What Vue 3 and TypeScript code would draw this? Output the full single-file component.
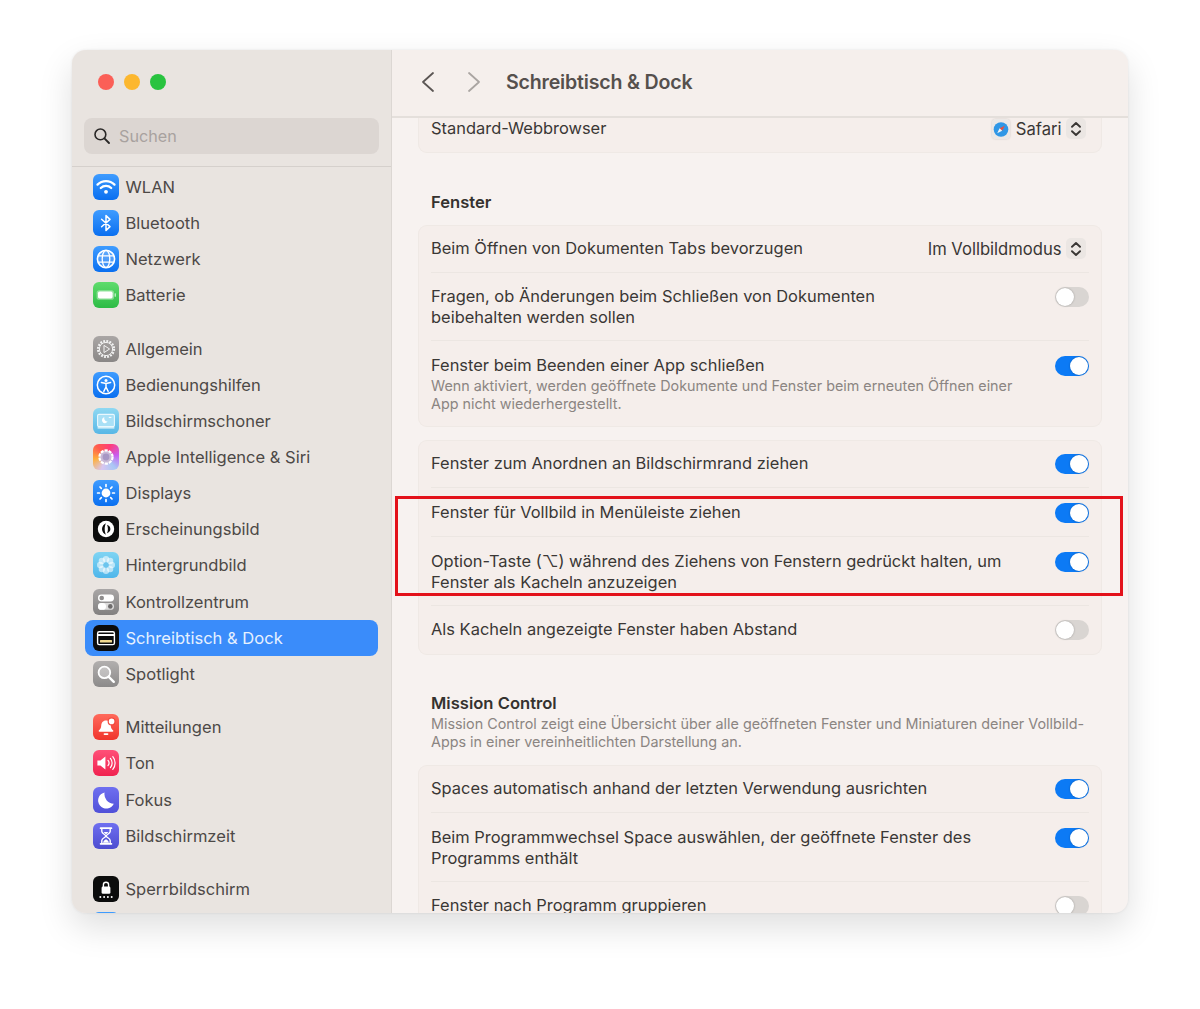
<script setup lang="ts">
interface NavItem { label: string; icon: string; bg: string; active?: boolean }
const groups: NavItem[][] = [
  [
    { label: 'WLAN', icon: 'wifi', bg: 'linear-gradient(#3f9cff,#0a6ff0)' },
    { label: 'Bluetooth', icon: 'bt', bg: 'linear-gradient(#3f9cff,#0a6ff0)' },
    { label: 'Netzwerk', icon: 'globe', bg: 'linear-gradient(#3f9cff,#0a6ff0)' },
    { label: 'Batterie', icon: 'battery', bg: 'linear-gradient(#5fdc6c,#2dbb45)' }
  ],
  [
    { label: 'Allgemein', icon: 'gear', bg: 'linear-gradient(#aaa6a5,#8a8786)' },
    { label: 'Bedienungshilfen', icon: 'access', bg: 'linear-gradient(#3f9cff,#0a6ff0)' },
    { label: 'Bildschirmschoner', icon: 'saver', bg: 'linear-gradient(#8fd8f2,#58b7e6)' },
    { label: 'Apple Intelligence & Siri', icon: 'siri', bg: 'conic-gradient(from 20deg,#ff3d77,#c95cf0,#a9c8f5,#d8c6f0,#ffb03b,#ff5a4d,#ff3d77)' },
    { label: 'Displays', icon: 'sun', bg: 'linear-gradient(#3f9cff,#0a6ff0)' },
    { label: 'Erscheinungsbild', icon: 'appear', bg: '#0c0c0c' },
    { label: 'Hintergrundbild', icon: 'flower', bg: 'linear-gradient(#7fd4f3,#4fb6ea)' },
    { label: 'Kontrollzentrum', icon: 'control', bg: 'linear-gradient(#a9a6a6,#828080)' },
    { label: 'Schreibtisch & Dock', icon: 'dock', bg: '#0c0c0c', active: true },
    { label: 'Spotlight', icon: 'spot', bg: 'linear-gradient(#b2afae,#8c8a8a)' }
  ],
  [
    { label: 'Mitteilungen', icon: 'bell', bg: 'linear-gradient(#ff6a5c,#f0342c)' },
    { label: 'Ton', icon: 'sound', bg: 'linear-gradient(#ff5078,#f0224f)' },
    { label: 'Fokus', icon: 'moon', bg: 'linear-gradient(#6f6ff0,#5050d8)' },
    { label: 'Bildschirmzeit', icon: 'hour', bg: 'linear-gradient(#6f6ff0,#4c4cd0)' }
  ],
  [
    { label: 'Sperrbildschirm', icon: 'lock', bg: '#0c0c0c' },
    { label: 'Datenschutz & Sicherheit', icon: 'none', bg: 'linear-gradient(#3f9cff,#0a6ff0)' }
  ]
]

interface Row { title: string[]; sub?: string[]; toggle?: boolean; select?: string; safari?: boolean }
const firstCard: Row[] = [{ title: ['Standard-Webbrowser'], select: 'Safari', safari: true }]
const windowCard: Row[] = [
  { title: ['Beim Öffnen von Dokumenten Tabs bevorzugen'], select: 'Im Vollbildmodus' },
  { title: ['Fragen, ob Änderungen beim Schließen von Dokumenten', 'beibehalten werden sollen'], toggle: false },
  {
    title: ['Fenster beim Beenden einer App schließen'],
    sub: ['Wenn aktiviert, werden geöffnete Dokumente und Fenster beim erneuten Öffnen einer', 'App nicht wiederhergestellt.'],
    toggle: true
  }
]
const tileCard: Row[] = [
  { title: ['Fenster zum Anordnen an Bildschirmrand ziehen'], toggle: true },
  { title: ['Fenster für Vollbild in Menüleiste ziehen'], toggle: true },
  { title: ['Option-Taste (⌥) während des Ziehens von Fenstern gedrückt halten, um', 'Fenster als Kacheln anzuzeigen'], toggle: true },
  { title: ['Als Kacheln angezeigte Fenster haben Abstand'], toggle: false }
]
const missionCard: Row[] = [
  { title: ['Spaces automatisch anhand der letzten Verwendung ausrichten'], toggle: true },
  { title: ['Beim Programmwechsel Space auswählen, der geöffnete Fenster des', 'Programms enthält'], toggle: true },
  { title: ['Fenster nach Programm gruppieren'], toggle: false }
]
const sections = [
  { heading: '', desc: [] as string[], rows: firstCard },
  { heading: 'Fenster', desc: [] as string[], rows: windowCard },
  { heading: '', desc: [] as string[], rows: tileCard },
  {
    heading: 'Mission Control',
    desc: ['Mission Control zeigt eine Übersicht über alle geöffneten Fenster und Miniaturen deiner Vollbild-', 'Apps in einer vereinheitlichten Darstellung an.'],
    rows: missionCard
  }
]
</script>

<template>
  <div class="stage">
    <div class="window">
      <aside class="sidebar">
        <div class="lights">
          <span class="light red"></span>
          <span class="light yellow"></span>
          <span class="light green"></span>
        </div>
        <div class="search">
          <svg class="search-icon" viewBox="0 0 18 18" width="18" height="18">
            <circle cx="7.4" cy="7.4" r="5.4" fill="none" stroke="#2a2827" stroke-width="1.6" />
            <path d="M11.4 11.4 16 16" stroke="#2a2827" stroke-width="1.9" stroke-linecap="round" />
          </svg>
          <span>Suchen</span>
        </div>
        <nav class="nav">
          <div v-for="(group, g) in groups" :key="g" class="group">
            <div v-for="item in groups[g]" :key="item.label" class="nav-row" :class="{ active: item.active }">
              <span class="app-icon" :style="{ background: item.bg }">
                <svg viewBox="0 0 26 26" width="26" height="26" fill="none">
                  <g v-if="item.icon === 'wifi'" stroke="#fff" stroke-linecap="round">
                    <path d="M4.5 10.6a12 12 0 0 1 17 0" stroke-width="2.3" />
                    <path d="M7.8 14a7.4 7.4 0 0 1 10.4 0" stroke-width="2.3" />
                    <circle cx="13" cy="17.8" r="1.9" fill="#fff" stroke="none" />
                  </g>
                  <path v-else-if="item.icon === 'bt'" d="M8.6 9.2 17 16.6 13 20.4V5.6l4 3.8-8.4 7.4" stroke="#fff" stroke-width="1.5" stroke-linejoin="round" stroke-linecap="round" />
                  <g v-else-if="item.icon === 'globe'" stroke="#fff" stroke-width="1.3">
                    <circle cx="13" cy="13" r="8.6" fill="#ffffff33" stroke-width="1.6" />
                    <ellipse cx="13" cy="13" rx="3.8" ry="8.6" />
                    <path d="M5 9.8h16M5 16.2h16" />
                  </g>
                  <g v-else-if="item.icon === 'battery'">
                    <rect x="3.6" y="8.2" width="17.4" height="9.6" rx="2.6" fill="#ffffff60" />
                    <rect x="5" y="9.600" width="14.600" height="6.800" rx="1.600" fill="#fff" />
                    <rect x="21.6" y="11.2" width="1.3" height="3.6" rx=".6" fill="#ffffffb0" />
                  </g>
                  <g v-else-if="item.icon === 'gear'" stroke="#f2f2f2">
                    <circle cx="13" cy="13" r="8" stroke-width="2.2" stroke-dasharray="1.9 1.25" />
                    <circle cx="13" cy="13" r="6.6" stroke-width="1" />
                    <path d="M11 9.4 16.6 13 11 16.6Z" stroke-width="1" stroke-linejoin="round" />
                  </g>
                  <g v-else-if="item.icon === 'access'">
                    <circle cx="13" cy="13" r="8.7" stroke="#fff" stroke-width="1.5" />
                    <circle cx="13" cy="8.4" r="1.5" fill="#fff" />
                    <path d="M8.4 10.6 13 11.6l4.6-1M13 11.6v3.4M13 15l-2.2 4.4M13 15l2.2 4.4" stroke="#fff" stroke-width="1.5" stroke-linecap="round" stroke-linejoin="round" />
                  </g>
                  <g v-else-if="item.icon === 'saver'">
                    <rect x="4.6" y="6.4" width="16.8" height="12.2" rx="1.4" fill="#a9e0f6" stroke="#eaf8fd" stroke-width="1.1" />
                    <path d="M4.6 19.8h16.8" stroke="#eaf8fd" stroke-width="1.2" />
                    <path d="M11.4 9.2a3 3 0 1 0 3.2 4.4 3.3 3.3 0 0 1-3.2-4.4Z" fill="#fff" />
                    <path d="M15.8 9.4h2.6" stroke="#fff" stroke-width="1" />
                  </g>
                  <g v-else-if="item.icon === 'siri'">
                    <circle cx="13" cy="13" r="6.6" fill="#c9b9d6" stroke="#fff" stroke-width="2.2" stroke-dasharray="3.2 1" />
                    <circle cx="13" cy="13" r="3.4" fill="#a797c4" />
                  </g>
                  <g v-else-if="item.icon === 'sun'" stroke="#fff" stroke-linecap="round" stroke-width="1.7">
                    <circle cx="13" cy="13" r="4.4" fill="#fff" stroke="none" />
                    <path d="M13 4.6v1.8M13 19.6v1.8M4.6 13h1.8M19.6 13h1.8M7 7l1.3 1.3M17.7 17.7 19 19M7 19l1.3-1.3M17.7 8.3 19 7" />
                  </g>
                  <g v-else-if="item.icon === 'appear'">
                    <circle cx="13" cy="13" r="8.200" fill="#fff" />
                    <path d="M13 7.200c-2.400 1-4 3.200-4 5.800s1.600 4.800 4 5.800c-.9-1.600-1.300-3.600-1.300-5.800s.4-4.200 1.300-5.800Z" fill="#0c0c0c" />
                    <path d="M14 8.800c2 .6 3.400 2.200 3.400 4.200s-1.400 3.600-3.400 4.200c.6-1.200.9-2.600.9-4.200s-.3-3-.9-4.200Z" fill="#0c0c0c" />
                  </g>
                  <g v-else-if="item.icon === 'flower'" fill="#ffffff90">
                    <circle cx="13" cy="7.200" r="3.200" />
                    <circle cx="13" cy="18.800" r="3.200" />
                    <circle cx="7.200" cy="13" r="3.200" />
                    <circle cx="18.800" cy="13" r="3.200" />
                    <circle cx="8.900" cy="8.900" r="3.200" />
                    <circle cx="17.100" cy="8.900" r="3.200" />
                    <circle cx="8.900" cy="17.100" r="3.200" />
                    <circle cx="17.100" cy="17.100" r="3.200" />
                    <circle cx="13" cy="13" r="2.400" fill="#6cc5ee" />
                  </g>
                  <g v-else-if="item.icon === 'control'">
                    <rect x="5" y="5.600" width="16" height="6.800" rx="3.400" fill="#fff" />
                    <circle cx="8.700" cy="9" r="2.300" fill="#8f8d8d" />
                    <rect x="5" y="14" width="16" height="6.800" rx="3.400" fill="#dddcdc" />
                    <circle cx="17.300" cy="17.400" r="2.300" fill="#6e6c6c" />
                    <rect x="5" y="14" width="8" height="6.800" rx="3.400" fill="#fff" />
                  </g>
                  <g v-else-if="item.icon === 'dock'">
                    <rect x="4.600" y="6.800" width="16.800" height="12.800" rx="1.600" stroke="#fff" stroke-width="1.400" />
                    <path d="M5 10h16" stroke="#fff" stroke-width="1.800" />
                    <rect x="7" y="15" width="12" height="2.600" rx=".6" fill="#f1d98f" />
                  </g>
                  <g v-else-if="item.icon === 'spot'" stroke="#fff">
                    <circle cx="11.400" cy="11.400" r="5.800" stroke-width="1.800" fill="#ffffff55" />
                    <path d="M15.800 15.800 20.800 20.800" stroke-width="2.400" stroke-linecap="round" />
                  </g>
                  <g v-else-if="item.icon === 'bell'" fill="#fff">
                    <path d="M13 6.400c-3.200 0-4.600 2.400-4.800 5.400-.1 2-.9 3.400-2.400 4.800-.4.5-.1 1.200.6 1.200h13.200c.7 0 1-.7.600-1.200-1.500-1.400-2.300-2.800-2.400-4.800-.2-3-1.600-5.400-4.800-5.400Z" />
                    <rect x="10.600" y="19.200" width="4.800" height="1.800" rx=".9" />
                    <circle cx="18.600" cy="7.400" r="3.400" stroke="#f2483d" stroke-width="1.200" />
                  </g>
                  <g v-else-if="item.icon === 'sound'">
                    <path d="M4.400 10.400h3l5-4v13.200l-5-4h-3Z" fill="#fff" />
                    <path d="M15 10.400a4 4 0 0 1 0 5.200M17.400 8.400a7 7 0 0 1 0 9.200M19.800 6.600a10 10 0 0 1 0 12.800" stroke="#fff" stroke-width="1.200" stroke-linecap="round" />
                  </g>
                  <path v-else-if="item.icon === 'moon'" d="M11.600 5.400a8.200 8.200 0 1 0 9.200 11.400A9.600 9.600 0 0 1 11.600 5.400Z" fill="#fff" />
                  <g v-else-if="item.icon === 'hour'">
                    <path d="M7.600 5.200h10.800M7.600 20.800h10.800" stroke="#fff" stroke-width="1.800" stroke-linecap="round" />
                    <path d="M8.800 6v2.600c0 2 4.200 3.400 4.200 4.400s-4.200 2.400-4.200 4.400V20M17.200 6v2.600c0 2-4.200 3.400-4.200 4.400s4.200 2.400 4.200 4.400V20" stroke="#fff" stroke-width="1.400" />
                    <path d="M10 19.800c.4-2 2-3 3-3.600 1 .6 2.600 1.600 3 3.600ZM10.600 9h4.800L13 11.400Z" fill="#fff" />
                  </g>
                  <g v-else-if="item.icon === 'lock'" fill="#fff">
                    <path d="M10.400 11V8.800a2.600 2.600 0 0 1 5.200 0V11" stroke="#fff" stroke-width="1.400" fill="none" />
                    <rect x="8.600" y="10.600" width="8.800" height="7.200" rx="1.400" />
                    <circle cx="7.300" cy="21" r="1" />
                    <circle cx="11.100" cy="21" r="1" />
                    <circle cx="14.900" cy="21" r="1" />
                    <circle cx="18.700" cy="21" r="1" />
                  </g>
                </svg>
              </span>
              <span class="nav-label">{{ item.label }}</span>
            </div>
          </div>
        </nav>
      </aside>

      <main class="main">
        <header class="header">
          <svg class="chev" viewBox="0 0 14 22" width="14" height="22" fill="none">
            <path d="M12 2 2 11l10 9" stroke="#5b5654" stroke-width="1.800" stroke-linecap="round" stroke-linejoin="round" />
          </svg>
          <svg class="chev fwd" viewBox="0 0 14 22" width="14" height="22" fill="none">
            <path d="M2 2 12 11 2 20" stroke="#aaa5a2" stroke-width="1.800" stroke-linecap="round" stroke-linejoin="round" />
          </svg>
          <h1 class="title">Schreibtisch &amp; Dock</h1>
        </header>
        <div class="scroll">
          <section v-for="(sec, s) in sections" :key="s" class="section" :class="{ headed: sec.heading, described: sec.desc.length }">
            <div v-if="sec.heading" class="sec-head">
              <h2>{{ sec.heading }}</h2>
              <p v-for="line in sec.desc" :key="line">{{ line }}</p>
            </div>
            <div class="card">
              <div v-for="row in sec.rows" :key="row.title[0]" class="row" :class="{ 'has-sub': row.sub, picker: row.select }">
                <div class="row-text">
                  <div v-for="line in row.title" :key="line" class="row-title">{{ line }}</div>
                  <div v-for="line in row.sub" :key="line" class="row-sub">{{ line }}</div>
                </div>
                <div v-if="row.select" class="select">
                  <span v-if="row.safari" class="safari">
                    <svg viewBox="0 0 18 20" width="18" height="20">
                      <rect width="18" height="20" rx="4" fill="#ebe8e6" />
                      <circle cx="9" cy="10.500" r="7.300" fill="#2f97e6" />
                      <path d="M12.800 6.700 7.600 9.300 10.200 11.700Z" fill="#e8503f" />
                      <path d="M5.200 14.300 7.600 9.300 10.200 11.700Z" fill="#f4f4f4" />
                    </svg>
                  </span>
                  <span>{{ row.select }}</span>
                  <span class="stepper">
                    <svg viewBox="0 0 12 18" width="12" height="18" fill="none">
                      <path d="M2 6.800 6 3l4 3.800M2 11.200 6 15l4-3.800" stroke="#3a3735" stroke-width="1.900" stroke-linecap="round" stroke-linejoin="round" />
                    </svg>
                  </span>
                </div>
                <span v-else class="toggle" :class="{ on: row.toggle }"><i></i></span>
              </div>
            </div>
          </section>
        </div>
      </main>
    </div>
    <div class="callout"></div>
  </div>
</template>

<style>
html, body { background: #fff; }
</style>

<style scoped>
* { box-sizing: border-box; }
.stage {
  position: relative;
  width: 1200px;
  height: 1009px;
  padding: 50px 72px 0;
  background: #fff;
  font-family: Inter, "Liberation Sans", sans-serif;
  overflow: hidden;
}
.window {
  display: flex;
  width: 1056px;
  height: 863px;
  border-radius: 14px;
  overflow: hidden;
  background: #f7f2f0;
  box-shadow: 0 14px 34px rgba(0, 0, 0, .13), 0 0 3px rgba(0, 0, 0, .08);
}
.sidebar {
  flex: 0 0 320px;
  display: flex;
  flex-direction: column;
  background: #e9e4e0;
  border-right: 1px solid #dcd7d3;
  overflow: hidden;
}
.lights { flex: none; display: flex; gap: 10px; padding: 24px 0 0 26px; height: 68px; }
.light { width: 16px; height: 16px; border-radius: 50%; }
.red { background: #fb5f57; }
.yellow { background: #fcb72f; }
.green { background: #28c33f; }
.search {
  flex: none;
  display: flex;
  align-items: center;
  gap: 8px;
  height: 36px;
  margin: 0 12px;
  padding-left: 9px;
  border-radius: 8px;
  background: #dcd6d2;
  color: #a8a29f;
  font-size: 16.2px;
}
.search-icon { flex: none; }
.nav {
  flex: none;
  margin-top: 12px;
  padding: 2px 13px 0;
  border-top: 1px solid #d5d0cc;
}
.group { margin-bottom: 17.5px; }
.nav-row {
  display: flex;
  align-items: center;
  gap: 6.5px;
  height: 36.1px;
  padding-left: 8px;
  border-radius: 8px;
  color: #4d4947;
  font-size: 16.55px;
  white-space: nowrap;
}
.nav-row.active { background: #3a8cfa; color: #e6f1ff; }
.app-icon {
  flex: none;
  display: block;
  width: 26px;
  height: 26px;
  border-radius: 6px;
  overflow: hidden;
}
.app-icon svg { display: block; }
.main { flex: 1; min-width: 0; display: flex; flex-direction: column; }
.header {
  flex: none;
  display: flex;
  align-items: center;
  height: 68px;
  padding: 0 0 2px 29px;
  background: #f5efec;
  border-bottom: 2px solid #e4dfdb;
  position: relative;
  z-index: 1;
}
.chev.fwd { margin-left: 32px; }
.title {
  margin: 0 0 0 25px;
  font-size: 19.6px;
  font-weight: 600;
  color: #55504d;
  letter-spacing: -.2px;
}
.scroll { flex: 1; min-height: 0; overflow: hidden; padding: 0 26px; margin-top: -13.5px; }
.section { margin-top: 13px; }
.section:first-child { margin-top: 0; }
.section.headed { margin-top: 39px; }
.section.described { margin-top: 38px; }
.sec-head { padding: 0 13px; margin-bottom: 12px; }
.section.described .sec-head { margin-bottom: 14px; }
.sec-head h2 {
  margin: 0;
  font-size: 16.6px;
  line-height: 21px;
  font-weight: 600;
  color: #35322f;
}
.sec-head p {
  margin: 0;
  font-size: 14.36px;
  line-height: 18px;
  color: #8b8582;
  white-space: nowrap;
}
.sec-head p:first-of-type { margin-top: 1px; }
.card {
  background: #f5eeeb;
  box-shadow: inset 0 0 0 1px #efe9e5;
  border-radius: 9px;
  padding: 0 13px;
}
.row {
  display: flex;
  align-items: flex-start;
  justify-content: space-between;
  min-height: 48.85px;
  padding: 13.5px 0 12px;
  border-bottom: 1px solid #ece6e2;
}
.row:last-child { border-bottom: 0; }
.row.picker { min-height: 48px; }
.row.has-sub { padding: 14px 0 14px; }
.row-text { min-width: 0; }
.row-title {
  font-size: 16.45px;
  line-height: 21px;
  color: #3a3735;
  white-space: nowrap;
}
.row-sub {
  font-size: 14.34px;
  line-height: 18px;
  color: #8b8582;
  white-space: nowrap;
}
.row-title + .row-sub { margin-top: .5px; }
.select {
  display: flex;
  align-items: center;
  height: 21px;
  font-size: 16.6px;
  color: #3a3735;
  margin-right: 3px;
}
.safari {
  display: block;
  margin-right: 6px;
  height: 20px;
  border-radius: 4px;
  box-shadow: 0 0 2px rgba(0, 0, 0, .18);
}
.safari svg { display: block; }
.stepper {
  display: flex;
  align-items: center;
  justify-content: center;
  width: 20px;
  height: 21px;
  margin-left: 4.5px;
  border-radius: 5px;
  background: #ebe6e3;
}
.toggle {
  position: relative;
  flex: none;
  display: block;
  width: 34px;
  height: 20px;
  margin-top: 1px;
  border-radius: 10px;
  background: #d9d5d2;
}
.toggle i {
  position: absolute;
  top: 1px;
  left: 1px;
  width: 18px;
  height: 18px;
  border-radius: 50%;
  background: #fff;
  box-shadow: 0 0 2px rgba(0, 0, 0, .3);
}
.toggle.on { background: #0c7af5; }
.toggle.on i { left: 15px; }
.callout {
  position: absolute;
  left: 395px;
  top: 496px;
  width: 728px;
  height: 100px;
  border: 3px solid #e3111a;
  pointer-events: none;
}
</style>
